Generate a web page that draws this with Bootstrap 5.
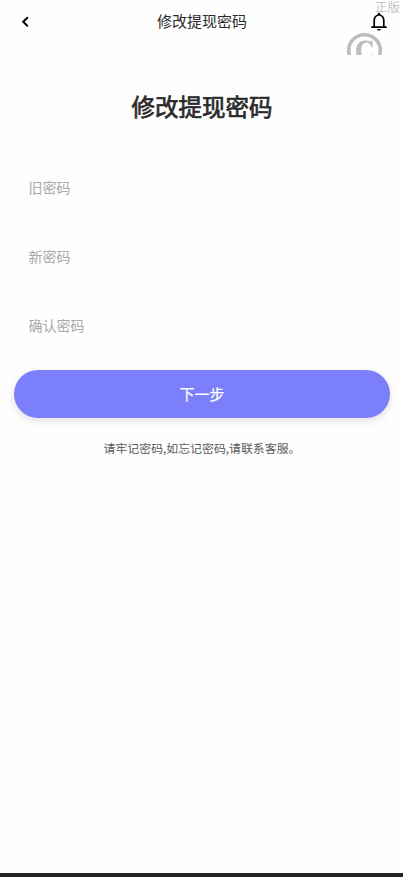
<!DOCTYPE html>
<html lang="zh-CN">
<head>
<meta charset="utf-8">
<meta name="viewport" content="width=device-width, initial-scale=1">
<title>修改提现密码</title>
<link href="https://cdn.jsdelivr.net/npm/bootstrap@5.3.0/dist/css/bootstrap.min.css" rel="stylesheet">
<style>
body{font-family:"Noto Sans CJK SC",sans-serif;background:#fefefe;color:#2b2b2b}
.screen{height:877px;border-bottom:4px solid #232122}
.topbar{height:55px;overflow:hidden}
.topbar-row{height:43px;padding:0 14px 0 18px}
.topbar-title{font-size:15px;line-height:22px;padding:0 0 2px 1px}
.bell{margin-top:-1px}
.stamp{right:3px;top:0;font-size:12.5px;line-height:13px;font-weight:300;color:#888;opacity:.75}
.stamp-ring{left:346px;top:32px}
.page-title{font-size:23.5px;line-height:34px;margin-top:34px;padding-left:1px;font-weight:400;-webkit-text-stroke:.7px #2b2b2b}
.fields{padding:0 13px 0 14px;margin-top:40px}
.field{height:48px;margin-bottom:21px;padding:0 14px 0 14.5px;font-size:14px;background:transparent;color:#2b2b2b}
.field::placeholder{color:#a9a9a9;opacity:1}
.btn-next{height:48px;background:#7b7ff9;font-size:15px;line-height:46px;font-weight:400;-webkit-text-stroke:.2px #fff;box-shadow:0 3px 8px rgba(0,0,0,.12)}
.note{font-size:11.9px;line-height:18px;margin-top:21px;color:#5a5a5a}
</style>
</head>
<body>
<div class="screen d-flex flex-column">
  <header class="topbar position-relative flex-shrink-0">
    <div class="topbar-row d-flex align-items-center justify-content-between">
      <svg width="14" height="14" viewBox="0 0 14 14" fill="none" stroke="#000" stroke-width="2"><path d="M9.800 2.200 5.200 6.800l4.600 4.600"/></svg>
      <div class="topbar-title position-absolute start-0 end-0 text-center">修改提现密码</div>
      <svg class="bell" width="20" height="20" viewBox="0 0 20 20"><path d="M5.200 16V9.300a4.800 5.300 0 0 1 9.600 0V16M2.300 16.200h15.400" fill="none" stroke="#000" stroke-width="1.700"/><path d="M8.700 4V3a1.300 1.300 0 0 1 2.600 0v1zM8.200 18h3.600a1.800 1.600 0 0 1-3.600 0z"/></svg>
    </div>
    <span class="stamp position-absolute">正版</span>
    <svg class="stamp-ring position-absolute" width="37" height="37" viewBox="0 0 37 37" fill="#bdbdbd"><circle cx="18.500" cy="18.500" r="15.800" fill="none" stroke="#bdbdbd" stroke-width="3.600"/><path d="M26.500 8.500v6.800h-1.300c-.9-3.300-2.500-4.700-4.700-4.700-3.600 0-5.300 3-5.300 8s2 7.600 5.300 7.600c2.400 0 4.500-1.600 5.600-4.200l1.300.7C26 26.500 23 28.500 19 28.500c-5.300 0-9-4-9-10s4-10 9.500-10c2 0 3.500.5 5 1.200L25.300 8.500z"/></svg>
  </header>
  <h1 class="page-title text-center mb-0">修改提现密码</h1>
  <form class="fields">
    <input class="field d-block w-100 border-0" type="password" placeholder="旧密码">
    <input class="field d-block w-100 border-0" type="password" placeholder="新密码">
    <input class="field d-block w-100 border-0" type="password" placeholder="确认密码">
    <button type="button" class="btn btn-next rounded-pill w-100 text-white border-0 py-0">下一步</button>
    <p class="note text-center mb-0">请牢记密码,如忘记密码,请联系客服。</p>
  </form>
</div>
<script src="https://cdn.jsdelivr.net/npm/bootstrap@5.3.0/dist/js/bootstrap.bundle.min.js"></script>
</body>
</html>
